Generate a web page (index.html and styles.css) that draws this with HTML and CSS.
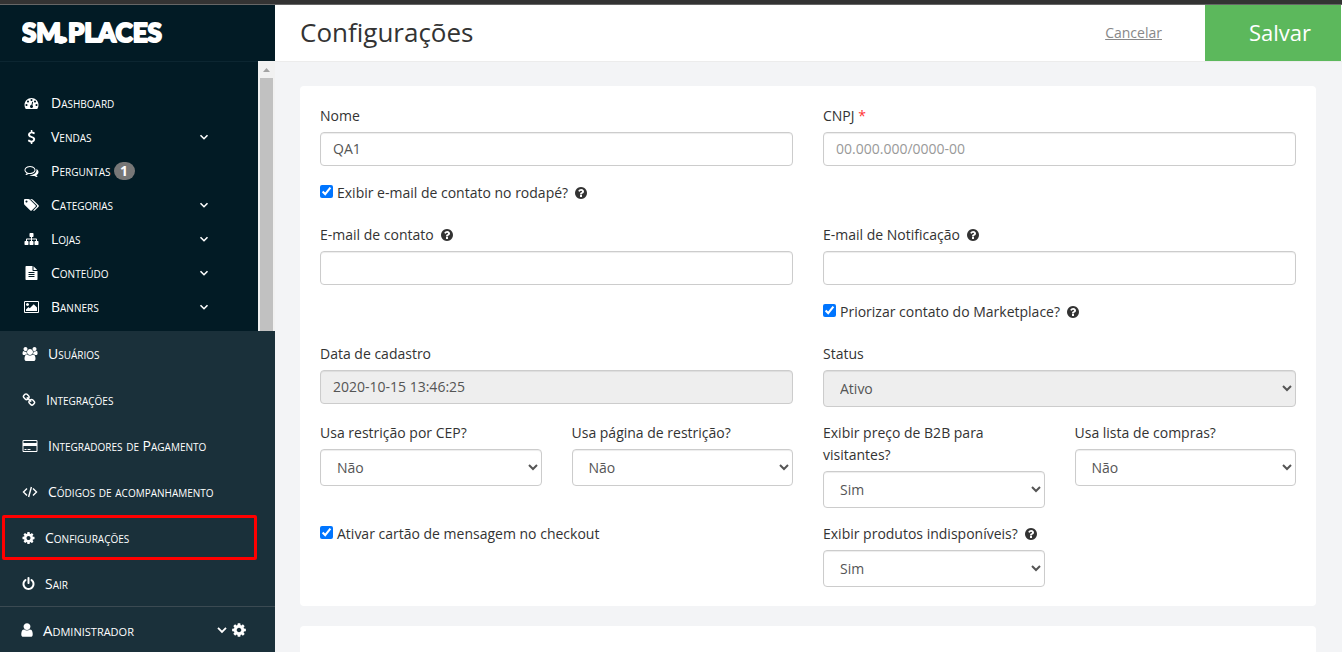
FILE: index.html
```html
<!DOCTYPE html>
<html lang="pt-BR">
<head>
<meta charset="utf-8">
<title>Configurações</title>
<link rel="stylesheet" href="styles.css">
</head>
<body>
<svg class="sprite" aria-hidden="true">
  <symbol id="i-dash" viewBox="0 0 1792 1792"><path d="M384 1152q0-53-37.500-90.500t-90.500-37.500-90.500 37.500-37.500 90.500 37.500 90.500 90.500 37.500 90.500-37.500 37.500-90.500zm192-448q0-53-37.500-90.500t-90.500-37.500-90.500 37.500-37.500 90.500 37.500 90.500 90.500 37.500 90.500-37.500 37.500-90.500zm428 481l101-382q6-26-7.500-48.500t-38.500-29.500-48 6.500-30 39.500l-101 382q-60 5-107 43.500t-63 98.500q-20 77 20 146t117 89 146-20 89-117q16-60-6-117t-72-91zm660-33q0-53-37.500-90.500t-90.500-37.500-90.500 37.500-37.500 90.500 37.500 90.500 90.500 37.500 90.500-37.500 37.500-90.500zm-640-640q0-53-37.500-90.500t-90.500-37.500-90.500 37.500-37.500 90.500 37.500 90.500 90.500 37.500 90.500-37.500 37.500-90.500zm448 192q0-53-37.500-90.500t-90.500-37.500-90.500 37.500-37.500 90.500 37.500 90.500 90.500 37.500 90.500-37.500 37.500-90.500zm320 448q0 261-141 483-19 29-54 29h-1402q-35 0-54-29-141-221-141-483 0-182 71-348t191-286 286-191 348-71 348 71 286 191 191 286 71 348z"/></symbol>
  <symbol id="i-dollar" viewBox="0 0 1792 1792"><path d="M1362 1185q0 153-99.500 263.500t-258.500 136.500v175q0 14-9 23t-23 9h-135q-13 0-22.500-9.500t-9.500-22.500v-175q-66-9-127.500-31t-101.500-44.500-74-48-46.500-37.500-17.500-18q-17-21-2-41l103-135q7-10 23-12 15-2 24 9l2 2q113 99 243 125 37 8 74 8 81 0 142.500-43t61.500-122q0-28-15-53t-33.500-42-58.500-37.500-66-32-80-32.500q-39-16-61.500-25t-61.500-26.500-62.500-31-56.500-35.500-53.500-42.500-43.500-49-35.500-58-21-66.500-8.500-78q0-138 98-242t255-134v-180q0-13 9.500-22.500t22.500-9.500h135q14 0 23 9t9 23v176q57 6 110.500 23t87 33.500 63.500 37.500 39 29 15 14q17 18 5 38l-81 146q-8 15-23 16-14 3-27-7-3-3-14.500-12t-39-26.500-58.500-32-74.500-26-85.500-11.500q-95 0-155 43t-60 111q0 26 8.500 48t29.500 41.500 39.500 33 56 31 60.500 27 70 27.500q53 20 81 31.500t76 35 75.500 42.500 62 50 53 63.500 31.500 76.500 13 94z"/></symbol>
  <symbol id="i-comments" viewBox="0 0 1792 1792"><path d="M704 384q-153 0-286 52t-211.500 141-78.500 191q0 82 53 158t149 132l97 56-35 84q34-20 62-39l44-31 53 10q78 14 153 14 153 0 286-52t211.500-141 78.500-191-78.500-191-211.500-141-286-52zm0-128q191 0 353.500 68.500t256.500 186.500 94 257-94 257-256.500 186.500-353.500 68.500q-86 0-176-16-124 88-278 128-36 9-86 16h-3q-11 0-20.500-8t-11.500-21q-1-3-1-6.500t.5-6.500 2-6l2.500-5 3.500-5.500 4-5 4.500-5 4-4.500q5-6 23-25t26-29.500 22.500-29 25-38.500 20.500-44q-124-72-195-177t-71-224q0-139 94-257t256.500-186.500 353.500-68.500zm822 1169q10 24 20.500 44t25 38.500 22.500 29 26 29.500 23 25q1 1 4 4.500t4.500 5 4 5 3.500 5.500l2.500 5 2 6 .5 6.500-1 6.500q-3 14-13 22t-22 7q-50-7-86-16-154-40-278-128-90 16-176 16-271 0-472-132 58 4 88 4 161 0 309-45t264-129q125-92 192-212t67-254q0-77-23-152 129 71 204 178t75 230q0 120-71 224.500t-195 176.500z"/></symbol>
  <symbol id="i-tags" viewBox="0 0 1920 1792"><path d="M448 448q0-53-37.500-90.500t-90.500-37.500-90.500 37.500-37.500 90.500 37.500 90.500 90.500 37.500 90.500-37.500 37.500-90.500zm1067 576q0 53-37 90l-491 492q-39 37-91 37-53 0-90-37l-715-716q-38-37-64.500-101t-26.500-117v-416q0-52 38-90t90-38h416q53 0 117 26.500t102 64.500l715 714q37 39 37 91zm384 0q0 53-37 90l-491 492q-39 37-91 37-36 0-59-14t-53-45l470-470q37-37 37-90 0-52-37-91l-715-714q-38-38-102-64.500t-117-26.500h224q53 0 117 26.500t102 64.500l715 714q37 39 37 91z"/></symbol>
  <symbol id="i-sitemap" viewBox="0 0 1792 1792"><path d="M1792 1248v320q0 40-28 68t-68 28h-320q-40 0-68-28t-28-68v-320q0-40 28-68t68-28h96v-192h-512v192h96q40 0 68 28t28 68v320q0 40-28 68t-68 28h-320q-40 0-68-28t-28-68v-320q0-40 28-68t68-28h96v-192h-512v192h96q40 0 68 28t28 68v320q0 40-28 68t-68 28h-320q-40 0-68-28t-28-68v-320q0-40 28-68t68-28h96v-192q0-52 38-90t90-38h512v-192h-96q-40 0-68-28t-28-68v-320q0-40 28-68t68-28h320q40 0 68 28t28 68v320q0 40-28 68t-68 28h-96v192h512q52 0 90 38t38 90v192h96q40 0 68 28t28 68z"/></symbol>
  <symbol id="i-file" viewBox="0 0 1792 1792"><path d="M1596 476q14 14 28 36h-472v-472q22 14 36 28zm-476 164h544v1056q0 40-28 68t-68 28h-1344q-40 0-68-28t-28-68v-1600q0-40 28-68t68-28h800v544q0 40 28 68t68 28zm160 736v-64q0-14-9-23t-23-9h-704q-14 0-23 9t-9 23v64q0 14 9 23t23 9h704q14 0 23-9t9-23zm0-256v-64q0-14-9-23t-23-9h-704q-14 0-23 9t-9 23v64q0 14 9 23t23 9h704q14 0 23-9t9-23zm0-256v-64q0-14-9-23t-23-9h-704q-14 0-23 9t-9 23v64q0 14 9 23t23 9h704q14 0 23-9t9-23z"/></symbol>
  <symbol id="i-picture" viewBox="-64 0 1920 1792"><path d="M576 576q0 80-56 136t-136 56-136-56-56-136 56-136 136-56 136 56 56 136zm1024 384v448h-1408v-192l320-320 160 160 512-512zm96-704h-1600q-13 0-22.500 9.500t-9.500 22.500v1216q0 13 9.500 22.500t22.500 9.500h1600q13 0 22.500-9.500t9.500-22.500v-1216q0-13-9.500-22.500t-22.500-9.500zm160 32v1216q0 66-47 113t-113 47h-1600q-66 0-113-47t-47-113v-1216q0-66 47-113t113-47h1600q66 0 113 47t47 113z"/></symbol>
  <symbol id="i-users" viewBox="0 0 1920 1792"><path d="M593 896q-162 5-265 128h-134q-82 0-138-40.500t-56-118.500q0-353 124-353 6 0 43.500 21t97.500 42.500 119 21.500q67 0 133-23-5 37-5 66 0 159 93 293zm1071 637q0 120-73 189.500t-194 69.500h-874q-121 0-194-69.500t-73-189.500q0-53 3.500-103.500t14-109 26.500-108.500 43-97.500 62-81 85.500-53.500 111.500-20q10 0 43 21.500t73 48 107 48 135 21.500 135-21.500 107-48 73-48 43-21.500q61 0 111.500 20t85.500 53.500 62 81 43 97.500 26.500 108.500 14 109 3.500 103.500zm-1024-1277q0 106-75 181t-181 75-181-75-75-181 75-181 181-75 181 75 75 181zm704 384q0 159-112.500 271.500t-271.500 112.500-271.500-112.500-112.500-271.500 112.500-271.500 271.500-112.500 271.500 112.500 112.500 271.500zm576 225q0 78-56 118.500t-138 40.500h-134q-103-123-265-128 93-134 93-293 0-29-5-66 66 23 133 23 59 0 119-21.500t97.500-42.500 43.500-21q124 0 124 353zm-128-609q0 106-75 181t-181 75-181-75-75-181 75-181 181-75 181 75 75 181z"/></symbol>
  <symbol id="i-link" viewBox="64 0 1664 1792"><path d="M1520 1216q0-40-28-68l-208-208q-28-28-68-28-42 0-72 32 3 3 19 18.500t21.500 21.500 15 19 13 25.500 3.500 27.500q0 40-28 68t-68 28q-15 0-27.500-3.500t-25.500-13-19-15-21.500-21.500-18.500-19q-33 31-33 73 0 40 28 68l206 207q27 27 68 27 40 0 68-26l147-146q28-28 28-67zm-703-705q0-40-28-68l-206-207q-28-28-68-28-39 0-68 27l-147 146q-28 28-28 67 0 40 28 68l208 208q27 27 68 27 42 0 72-31-3-3-19-18.500t-21.500-21.500-15-19-13-25.500-3.500-27.500q0-40 28-68t68-28q15 0 27.500 3.500t25.500 13 19 15 21.500 21.500 18.500 19q33-31 33-73zm895 705q0 120-85 203l-147 146q-83 83-203 83-121 0-204-85l-206-207q-83-83-83-203 0-123 88-209l-88-88q-86 88-208 88-120 0-204-84l-208-208q-84-84-84-204t85-203l147-146q83-83 203-83 121 0 204 85l206 207q83 83 83 203 0 123-88 209l88 88q86-88 208-88 120 0 204 84l208 208q84 84 84 204z"/></symbol>
  <symbol id="i-card" viewBox="0 0 1920 1792"><path d="M1760 128q66 0 113 47t47 113v1216q0 66-47 113t-113 47h-1600q-66 0-113-47t-47-113v-1216q0-66 47-113t113-47h1600zm-1600 128q-13 0-22.500 9.500t-9.500 22.500v224h1664v-224q0-13-9.500-22.500t-22.500-9.500h-1600zm1600 1280q13 0 22.500-9.500t9.500-22.500v-608h-1664v608q0 13 9.500 22.500t22.500 9.500h1600zm-1504-128v-128h256v128h-256zm384 0v-128h384v128h-384z"/></symbol>
  <symbol id="i-code" viewBox="0 0 15 14"><path d="M4.500 3.500 1 7l3.500 3.500M10.500 3.500 14 7l-3.500 3.500M8.900 2 6.100 12" fill="none" stroke="currentColor" stroke-width="1.400"/></symbol>
  <symbol id="i-cog" viewBox="128 0 1536 1792"><path d="M1152 896q0-106-75-181t-181-75-181 75-75 181 75 181 181 75 181-75 75-181zm512-109v222q0 12-8 23t-20 13l-185 28q-19 54-39 91 35 50 107 138 10 12 10 25t-9 23q-27 37-99 108t-94 71q-12 0-26-9l-138-108q-44 23-91 38-16 136-29 186-7 28-36 28h-222q-14 0-24.500-8.500t-11.500-21.500l-28-184q-49-16-90-37l-141 107q-10 9-25 9-14 0-25-11-126-114-165-168-7-10-7-23 0-12 8-23 15-21 51-66.500t54-70.500q-27-50-41-99l-183-27q-13-2-21-12.500t-8-23.500v-222q0-12 8-23t19-13l186-28q14-46 39-92-40-57-107-138-10-12-10-24 0-10 9-23 26-36 98.500-107.500t94.500-71.500q13 0 26 10l138 107q44-23 91-38 16-136 29-186 7-28 36-28h222q14 0 24.500 8.500t11.500 21.500l28 184q49 16 90 37l142-107q9-9 24-9 13 0 25 10 129 119 165 170 7 8 7 22 0 12-8 23-15 21-51 66.500t-54 70.500q26 50 41 98l183 28q13 2 21 12.500t8 23.500z"/></symbol>
  <symbol id="i-power" viewBox="128 0 1536 1792"><path d="M1664 896q0 156-61 298t-164 245-245 164-298 61-298-61-245-164-164-245-61-298q0-182 80.500-343t226.500-270q43-32 95.500-25t83.500 50q32 42 24.500 94.500t-49.500 84.500q-98 74-151.500 181t-53.500 228q0 104 40.500 198.500t109.500 163.500 163.500 109.500 198.500 40.500 198.500-40.500 163.500-109.500 109.500-163.500 40.500-198.500q0-121-53.500-228t-151.500-181q-42-32-49.500-84.500t24.500-94.500q31-43 84-50t95 25q146 109 226.500 270t80.500 343zm-640-768v640q0 52-38 90t-90 38-90-38-38-90v-640q0-52 38-90t90-38 90 38 38 90z"/></symbol>
  <symbol id="i-user" viewBox="256 0 1280 1792"><path d="M1536 1399q0 109-62.500 187t-150.500 78h-854q-88 0-150.500-78t-62.500-187q0-85 8.500-160.500t31.500-152 58.500-131 94-89 134.500-34.500q131 128 313 128t313-128q76 0 134.500 34.500t94 89 58.500 131 31.500 152 8.500 160.500zm-256-887q0 159-112.500 271.500t-271.500 112.500-271.500-112.500-112.500-271.500 112.500-271.500 271.500-112.500 271.500 112.500 112.500 271.500z"/></symbol>
  <symbol id="i-down" viewBox="0 0 10 14"><path d="M1.500 5.200 5 8.700l3.500-3.500" fill="none" stroke="currentColor" stroke-width="1.600"/></symbol>
  <symbol id="i-help" viewBox="128 0 1536 1792"><path d="M1024 1376v-192q0-14-9-23t-23-9h-192q-14 0-23 9t-9 23v192q0 14 9 23t23 9h192q14 0 23-9t9-23zm256-672q0-88-55.500-163t-138.500-116-170-41q-243 0-371 213-15 24 8 42l132 100q7 6 19 6 16 0 25-12 53-68 86-92 34-24 86-24 48 0 85.500 26t37.500 59q0 38-20 61t-68 45q-63 28-115.500 86.500t-52.500 125.500v36q0 14 9 23t23 9h192q14 0 23-9t9-23q0-19 21.500-49.500t54.500-49.500q32-18 49-28.500t46-35 44.500-48 28-60.500 12.500-81zm384 192q0 209-103 385.500t-279.500 279.500-385.500 103-385.500-103-279.500-279.500-103-385.500 103-385.500 279.500-279.500 385.500-103 385.500 103 279.500 279.500 103 385.500z"/></symbol>
</svg>

<div class="app">
  <aside class="sidebar">
    <a class="brand" href="#"><svg class="logo" viewBox="0 0 150 30"><text class="logo-text" x="0" y="24">SM.<tspan x="46">PLACES</tspan></text><circle cx="39" cy="22" r="4"/></svg></a>
    <div class="nav-scroll">
      <nav class="nav">
        <a class="nav-item" href="#"><svg class="nav-icon"><use href="#i-dash"/></svg>Dashboard</a>
        <a class="nav-item" href="#"><svg class="nav-icon"><use href="#i-dollar"/></svg>Vendas<svg class="nav-arrow"><use href="#i-down"/></svg></a>
        <a class="nav-item" href="#"><svg class="nav-icon"><use href="#i-comments"/></svg>Perguntas<span class="badge">1</span></a>
        <a class="nav-item" href="#"><svg class="nav-icon"><use href="#i-tags"/></svg>Categorias<svg class="nav-arrow"><use href="#i-down"/></svg></a>
        <a class="nav-item" href="#"><svg class="nav-icon"><use href="#i-sitemap"/></svg>Lojas<svg class="nav-arrow"><use href="#i-down"/></svg></a>
        <a class="nav-item" href="#"><svg class="nav-icon"><use href="#i-file"/></svg>Conteúdo<svg class="nav-arrow"><use href="#i-down"/></svg></a>
        <a class="nav-item" href="#"><svg class="nav-icon"><use href="#i-picture"/></svg>Banners<svg class="nav-arrow"><use href="#i-down"/></svg></a>
      </nav>
      <div class="scrollbar"><span class="scroll-up"></span><span class="scroll-thumb"></span></div>
    </div>
    <nav class="user-menu">
      <a class="menu-item" href="#"><svg class="icon w16"><use href="#i-users"/></svg>Usuários</a>
      <a class="menu-item" href="#"><svg class="icon w14"><use href="#i-link"/></svg>Integrações</a>
      <a class="menu-item" href="#"><svg class="icon w16"><use href="#i-card"/></svg>Integradores de Pagamento</a>
      <a class="menu-item" href="#"><svg class="icon w16"><use href="#i-code"/></svg>Códigos de acompanhamento</a>
      <a class="menu-item active" href="#"><svg class="icon w13"><use href="#i-cog"/></svg>Configurações</a>
      <a class="menu-item" href="#"><svg class="icon w13"><use href="#i-power"/></svg>Sair</a>
    </nav>
    <button class="account" type="button"><svg class="icon w12"><use href="#i-user"/></svg>Administrador<span class="account-tools"><svg class="icon w12"><use href="#i-down"/></svg><svg class="icon w14"><use href="#i-cog"/></svg></span></button>
  </aside>

  <form class="main">
    <header class="topbar">
      <h1 class="title">Configurações</h1>
      <a class="cancel" href="#">Cancelar</a>
      <button class="save" type="button">Salvar</button>
    </header>
    <div class="content">
      <section class="card">
        <div class="row">
          <div class="field"><label class="label" for="nome">Nome</label><input class="control" id="nome" type="text" value="QA1"></div>
          <div class="field"><label class="label" for="cnpj">CNPJ <span class="required">*</span></label><input class="control" id="cnpj" type="text" placeholder="00.000.000/0000-00"></div>
        </div>
        <div class="row row-check">
          <label class="check"><input class="box" type="checkbox" checked>Exibir e-mail de contato no rodapé?<svg class="help"><use href="#i-help"/></svg></label>
        </div>
        <div class="row">
          <div class="field"><label class="label" for="contato">E-mail de contato<svg class="help"><use href="#i-help"/></svg></label><input class="control" id="contato" type="text"></div>
          <div class="field"><label class="label" for="notif">E-mail de Notificação<svg class="help"><use href="#i-help"/></svg></label><input class="control" id="notif" type="text"></div>
        </div>
        <div class="row row-check">
          <span></span>
          <label class="check"><input class="box" type="checkbox" checked>Priorizar contato do Marketplace?<svg class="help"><use href="#i-help"/></svg></label>
        </div>
        <div class="row row-select">
          <div class="field"><label class="label" for="data">Data de cadastro</label><input class="control readonly" id="data" type="text" value="2020-10-15 13:46:25" readonly></div>
          <div class="field"><label class="label" for="status">Status</label><select class="control select readonly" id="status"><option>Ativo</option></select></div>
        </div>
        <div class="row row-quarters row-select">
          <div class="field"><label class="label" for="cep">Usa restrição por CEP?</label><select class="control select" id="cep"><option>Não</option></select></div>
          <div class="field"><label class="label" for="pagina">Usa página de restrição?</label><select class="control select" id="pagina"><option>Não</option></select></div>
          <div class="field"><label class="label" for="b2b">Exibir preço de B2B para visitantes?</label><select class="control select" id="b2b"><option>Sim</option></select></div>
          <div class="field"><label class="label" for="lista">Usa lista de compras?</label><select class="control select" id="lista"><option>Não</option></select></div>
        </div>
        <div class="row row-quarters row-last">
          <label class="check span-two"><input class="box" type="checkbox" checked>Ativar cartão de mensagem no checkout</label>
          <div class="field"><label class="label" for="indisp">Exibir produtos indisponíveis?<svg class="help"><use href="#i-help"/></svg></label><select class="control select" id="indisp"><option>Sim</option></select></div>
        </div>
      </section>
      <section class="card card-next"></section>
    </div>
  </form>
</div>
</body>
</html>
```
FILE: styles.css
```css
* { box-sizing: border-box; }

body {
  margin: 0;
  background: #f3f4f6;
  color: #333;
  font: 14px/22px "Open Sans", sans-serif;
}

a { color: inherit; text-decoration: none; }
button, input, select { font: inherit; }
svg { fill: currentColor; flex: none; }
.sprite { display: none; }

.app {
  display: flex;
  height: 100vh;
  overflow: hidden;
  border-top: 4px solid #333;
}

/* Sidebar */
.sidebar {
  display: flex;
  flex-direction: column;
  flex: none;
  width: 275px;
  border-top: 1px solid #666;
  background: #021b25;
  color: #fff;
  font-variant: small-caps;
}

.brand {
  display: flex;
  align-items: center;
  flex: none;
  height: 56px;
  padding: 0 22px;
  box-shadow: 0 1px #0c2631;
}

.logo { width: 150px; height: 30px; }

.logo-text {
  font: 900 26px Lato, sans-serif;
  font-variant: normal;
  stroke: #fff;
  stroke-width: 2px;
  stroke-linejoin: round;
}

.nav-scroll { display: flex; flex: 1; min-height: 0; }
.nav { flex: 1; padding-top: 25px; overflow: hidden; }

.nav-item {
  display: flex;
  align-items: center;
  height: 34px;
  padding: 0 49px 0 24px;
}

.nav-icon { width: 15px; height: 14px; margin-right: 12px; }
.nav-arrow { width: 10px; height: 14px; margin-left: auto; }

.badge {
  min-width: 21px;
  margin-left: 3px;
  border-radius: 9px;
  background: #777;
  font-weight: 700;
  line-height: 18px;
  text-align: center;
}

.scrollbar {
  display: flex;
  flex-direction: column;
  width: 17px;
  padding: 0 2px;
  background: #f1f1f1;
}

.scroll-up {
  height: 4px;
  margin: 7px 3px 6px;
  background: #a3a3a3;
  clip-path: polygon(50% 0, 100% 100%, 0 100%);
}

.scroll-thumb { flex: 1; background: #c1c1c1; }

.user-menu, .account { background: #1a303a; }

.menu-item {
  display: flex;
  align-items: center;
  gap: 10px;
  height: 46px;
  padding: 0 22px;
}

.menu-item.active { position: relative; }

.menu-item.active::after {
  content: "";
  position: absolute;
  inset: 0 18px 1px 2px;
  border: 3px solid #f00;
  border-radius: 2px;
}

.icon { height: 14px; }
.w12 { width: 12px; }
.w13 { width: 13px; }
.w14 { width: 14px; }
.w16 { width: 16px; }
.account .icon { height: 16px; }

.account {
  display: flex;
  align-items: center;
  gap: 10px;
  height: 46px;
  margin-top: -1px;
  padding: 0 29px 0 21px;
  border: 0;
  border-top: 1px solid #3b4a52;
  color: #fff;
  font-size: 15px;
  font-variant: small-caps;
  text-align: left;
}

.account-tools {
  display: flex;
  align-items: center;
  gap: 4px;
  margin-left: auto;
}

/* Main area */
.main {
  display: flex;
  flex-direction: column;
  flex: 1;
  min-width: 0;
}

.topbar {
  display: flex;
  align-items: center;
  flex: none;
  height: 58px;
  padding: 0 1px 0 25px;
  border-top: 1px solid #666;
  border-bottom: 1px solid #ececec;
  background: #fff;
}

.title { flex: 1; margin: 0; padding-bottom: 2px; font-size: 26px; font-weight: 400; line-height: 36px; }
.cancel { margin-right: 43px; color: #888; text-decoration: underline; }

.save {
  align-self: stretch;
  padding: 0 30px 2px 44px;
  border: 0;
  background: #5cb85c;
  color: #fff;
  font-size: 22px;
}

.content {
  display: flex;
  flex-direction: column;
  flex: 1;
  gap: 20px;
  min-height: 0;
  padding: 24px 26px 0 25px;
}

.card { flex: none; padding: 19px 20px; border-radius: 4px; background: #fff; }
.card-next { flex: 1; border-radius: 4px 4px 0 0; }

.row {
  display: grid;
  grid-template-columns: repeat(2, minmax(0, 1fr));
  align-items: start;
  column-gap: 30px;
  margin-bottom: 16px;
}

.row-quarters { grid-template-columns: repeat(4, minmax(0, 1fr)); }
.row-check { margin-bottom: 20px; }
.row-select { margin-bottom: 15px; }
.row-last { margin-bottom: 0; }
.span-two { grid-column: span 2; }

.label { display: block; margin-bottom: 5px; }
.required { color: #f33; }

.control {
  display: block;
  width: 100%;
  height: 34px;
  padding: 5px 12px 7px;
  border: 1px solid #ccc;
  border-radius: 4px;
  background: #fff;
  box-shadow: inset 0 1px 1px rgba(0, 0, 0, .075);
  color: #555;
}

.control::placeholder { color: #999; }
.select { height: 37px; padding: 6px 12px; }
.control.readonly { background: #eee; }

.check { display: flex; align-items: center; }
.box { width: 13px; height: 13px; margin: 0 4px 3px 0; }
.help { width: 12px; height: 14px; margin-left: 7px; vertical-align: -2px; }
```
